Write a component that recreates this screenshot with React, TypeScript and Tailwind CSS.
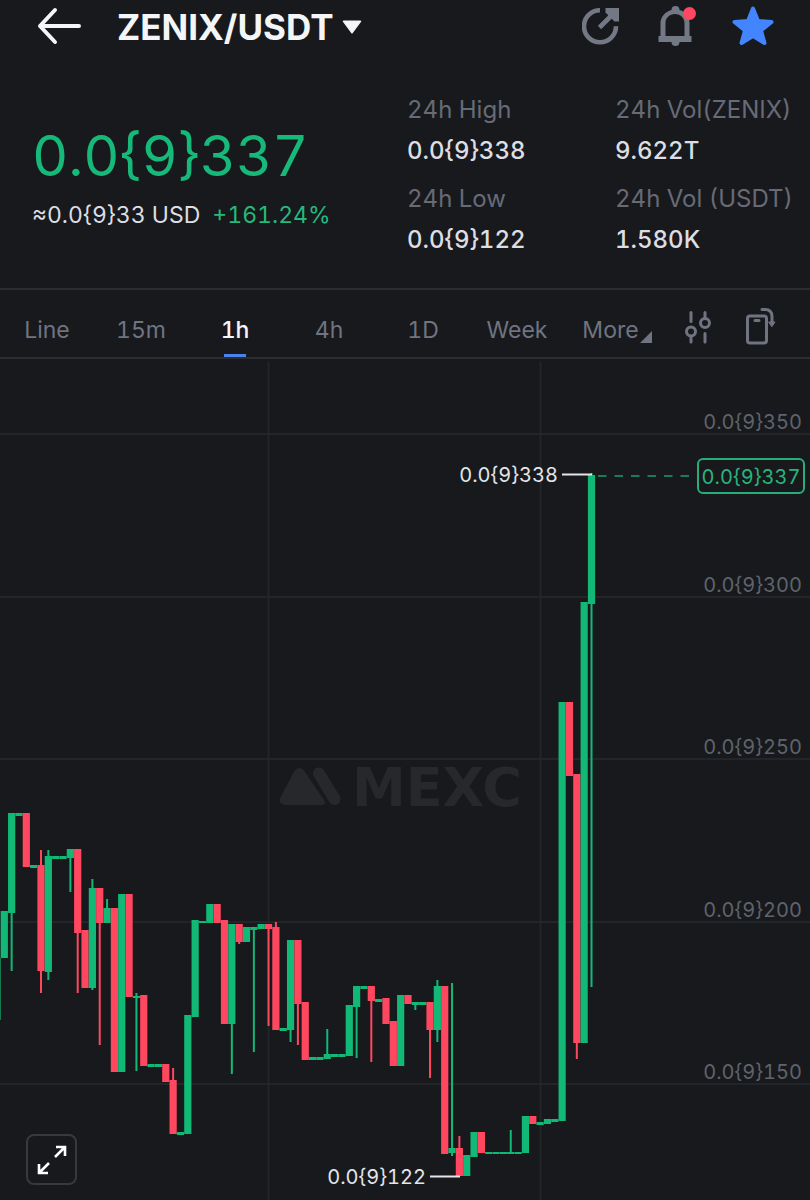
import React from "react";

type Candle = {
  up: boolean;
  high: number;
  top: number;
  bottom: number;
  low: number;
};

const STEP = 7.34;
const FIRST = 4.3;

const g = (top: number, bottom: number, high = top, low = bottom): Candle => ({ up: true, high, top, bottom, low });
const r = (top: number, bottom: number, high = top, low = bottom): Candle => ({ up: false, high, top, bottom, low });

const candles: Candle[] = [
  g(911, 958), g(813, 913, 813, 971), g(813, 816), r(813, 867), g(865, 868),
  r(865, 971, 850, 993), g(856, 972, 850, 980), g(856, 859), g(856, 859), g(849, 858, 849, 892),
  r(849, 933, 849, 993), r(930, 988), g(888, 988, 879, 990), r(888, 923, 888, 1045), g(908, 923, 899, 923),
  r(908, 1072), g(894, 1072), r(894, 997), g(996, 998, 993, 1071), r(995, 1066),
  g(1064, 1067), g(1064, 1067), r(1064, 1082), r(1080, 1134, 1068, 1134), g(1132, 1135),
  g(1015, 1134), g(920, 1017), g(921, 923), g(904, 923), r(904, 923),
  r(920, 1024), g(924, 1024, 924, 1074), r(924, 942, 924, 944), g(927, 942), g(927, 930, 927, 1052),
  g(924, 929), r(924, 929, 924, 1026), r(927, 1030, 922, 1030), g(1028, 1031), g(940, 1030, 940, 1042),
  r(940, 1004, 940, 1045), r(1002, 1060), g(1057, 1060), g(1057, 1060), g(1054, 1059, 1029, 1059),
  g(1054, 1057), g(1054, 1057), g(1005, 1056), g(986, 1007, 986, 1058), g(986, 989),
  r(986, 1001, 986, 1062), g(999, 1002), r(998, 1024), r(1021, 1066), g(995, 1066),
  r(995, 1004), g(1002, 1005, 1002, 1010), g(1002, 1005), r(1002, 1030, 1002, 1078), g(986, 1030, 980, 1042),
  r(986, 1154), g(1148, 1153, 983, 1156), r(1148, 1176, 1136, 1176), g(1155, 1176), g(1132, 1157),
  r(1132, 1153), g(1152, 1154), g(1152, 1154), g(1152, 1154), g(1152, 1154, 1130, 1154),
  g(1152, 1154), g(1116, 1153), r(1116, 1124), g(1122, 1125), g(1119, 1124),
  g(1119, 1122), g(702, 1121), r(702, 776), r(774, 1043, 774, 1059), g(602, 1043),
  g(475, 604, 473, 987),
];

const levels = [
  { y: 434, label: "0.0{9}350" },
  { y: 597, label: "0.0{9}300" },
  { y: 759, label: "0.0{9}250" },
  { y: 922, label: "0.0{9}200" },
  { y: 1084, label: "0.0{9}150" },
];

const stats = [
  { name: "24h High", value: "0.0{9}338" },
  { name: "24h Vol(ZENIX)", value: "9.622T" },
  { name: "24h Low", value: "0.0{9}122" },
  { name: "24h Vol (USDT)", value: "1.580K" },
];

const intervals = ["Line", "15m", "1h", "4h", "1D", "Week"];

function Header() {
  return (
    <header className="flex h-[52px] items-center justify-between pl-[37px] pr-9 text-[#f4f5f7]">
      <div className="flex items-center">
        <button type="button" aria-label="Back" className="mr-9">
          <svg width="44" height="38" viewBox="0 0 44 38" fill="none" stroke="currentColor" strokeWidth="4" strokeLinecap="round" strokeLinejoin="round">
            <path d="M42 19H3M18 3L3 19l15 16" />
          </svg>
        </button>
        <button type="button" className="flex items-center gap-2 pt-0.5">
          <h1 className="text-[35px] leading-10 font-bold">ZENIX/USDT</h1>
          <svg width="20" height="14" viewBox="0 0 20 14" fill="currentColor">
            <path d="M1.500 .5h17a.8.8 0 0 1 .6 1.300L10.800 13a1 1 0 0 1-1.600 0L.9 1.800A.8.8 0 0 1 1.500.5z" />
          </svg>
        </button>
      </div>
      <div className="flex items-center gap-9 text-[#737885]">
        <button type="button" aria-label="Share">
          <svg width="38" height="38" viewBox="0 0 38 38" fill="none" stroke="currentColor" strokeWidth="4.600">
            <path d="M18 3.300A16 16 0 1 0 34 19.300" />
            <path d="M17.500 20.500L31 7" />
            <path d="M23.500 1H37v13.500h-4.500L23.500 5.500z" fill="currentColor" stroke="none" />
          </svg>
        </button>
        <button type="button" aria-label="Price alerts">
          <svg width="40" height="42" viewBox="-1 0 40 42">
            <path d="M14.500 5a4 4 0 0 1 8 0c6.500 1.700 10 7 10 13v13h2v6h-12a4 4 0 0 1-8 0h-13v-6h2V18c0-6 4.500-11.300 11-13zM8.500 31h19V18c0-5-4-9-9.500-9s-9.500 4-9.500 9z" fill="currentColor" fillRule="evenodd" />
            <circle cx="32.500" cy="8.500" r="6.500" fill="#ff4760" />
          </svg>
        </button>
        <button type="button" aria-label="Favorite" className="text-[#4285ff]">
          <svg width="42" height="42" viewBox="0 0 42 42" fill="currentColor" stroke="currentColor" strokeWidth="4" strokeLinejoin="round">
            <path d="M21 3.500l5 12.500 13.500 1-10.500 8.500L32.500 38 21 31 9.500 38l3.500-12.500L2.500 17l13.500-1z" />
          </svg>
        </button>
      </div>
    </header>
  );
}

function Summary() {
  return (
    <section className="grid grid-cols-[375fr_403fr] pt-10 pb-[29px] pl-8 text-[#dcdee3]">
      <div className="pt-[29px]">
        <div className="text-[56px] leading-[70px] text-[#16b979]">0.0{"{9}"}337</div>
        <div className="flex gap-3 pt-2 text-[23px] leading-8 whitespace-nowrap">
          <span>≈0.0{"{9}"}33 USD</span>
          <span className="text-[#25b87c]">+161.24%</span>
        </div>
      </div>
      <dl className="grid grid-cols-[208fr_195fr] gap-y-[11px] whitespace-nowrap">
        {stats.map((s) => (
          <div key={s.name}>
            <dt className="text-2xl leading-9 text-[#676b76]">{s.name}</dt>
            <dd className="pt-1 text-2xl leading-[38px] font-medium">{s.value}</dd>
          </div>
        ))}
      </dl>
    </section>
  );
}

function Intervals() {
  return (
    <nav className="grid h-[71px] grid-cols-[repeat(7,94fr)_80fr_46fr_26fr] border-y-2 border-[#2b2d31] pt-4 text-[23px] text-[#6f7480]">
      {intervals.map((label) => (
        <button
          key={label}
          type="button"
          className={label === "1h" ? "relative pb-0.5 font-medium text-[#f4f5f7]" : "pb-0.5"}
        >
          {label}
          {label === "1h" && <span className="absolute bottom-0 left-1/2 h-[3px] w-[22px] -translate-x-1/2 bg-[#4a82ee]" />}
        </button>
      ))}
      <button type="button" className="flex items-center justify-center gap-px pb-0.5 pl-3">
        More
        <svg width="12" height="12" viewBox="0 0 12 12" fill="currentColor" className="mt-3">
          <path d="M12 0v12H0z" />
        </svg>
      </button>
      <button type="button" aria-label="Indicators" className="flex justify-center pt-1">
        <svg width="28" height="34" viewBox="0 0 28 34" fill="none" stroke="currentColor" strokeWidth="3" strokeLinecap="round">
          <path d="M7 2.500v9M7 27v5M21 2.500V7M21 23.500V32" />
          <circle cx="7" cy="21.500" r="4.500" />
          <circle cx="21" cy="13" r="4.500" />
        </svg>
      </button>
      <button type="button" aria-label="Rotate screen" className="flex justify-center">
        <svg width="32" height="40" viewBox="0 0 32 40" fill="none" stroke="currentColor" strokeWidth="3" strokeLinecap="round" strokeLinejoin="round">
          <rect x="2.500" y="10" width="19" height="27" rx="2.500" />
          <path d="M10 14.500h4M17 3.500h3c5 0 7 3 7 7v7" />
          <path d="M24 16h6l-3 4.500z" fill="currentColor" strokeWidth="1" />
        </svg>
      </button>
    </nav>
  );
}

function Chart() {
  return (
    <div className="relative">
      <svg viewBox="0 359 810 841" className="block w-full" role="img" aria-label="ZENIX/USDT hourly candles">
        <g stroke="#232529" strokeWidth="2">
          {levels.map((l) => (
            <line key={l.y} x1="0" x2="810" y1={l.y} y2={l.y} />
          ))}
          <line x1="268.500" x2="268.500" y1="362" y2="1200" />
          <line x1="540.500" x2="540.500" y1="362" y2="1200" />
        </g>

        {/* watermark */}
        <g fill="#26282c">
          <path d="M294 772q5-8 11 0l19 28q3 5-3 5h-35q-9-1-5-9z" />
          <path d="M319 773.500l15.500 25.500" stroke="#26282c" strokeWidth="12" strokeLinecap="round" />
          <text x="352" y="806" className="font-['DejaVu_Sans'] text-[54px] font-bold">MEXC</text>
        </g>

        <g fill="#5f636b" textAnchor="end" className="text-[20px]">
          {levels.map((l) => (
            <text key={l.y} x="802" y={l.y - 5}>{l.label}</text>
          ))}
        </g>

        {/* part of the candle that is scrolled off to the left */}
        <rect x="0" y="958" width="1" height="62" fill="#14784f" />
        {candles.map((c, i) => {
          const x = FIRST + i * STEP;
          return (
            <g key={i} fill={c.up ? "#12b876" : "#ff4760"}>
              <rect x={x - 1} y={c.high} width="2" height={c.low - c.high} />
              <rect x={x - 3.6} y={c.top} width="7.200" height={c.bottom - c.top} />
            </g>
          );
        })}

        <g fill="#e3e5e9" textAnchor="end" className="text-[20px]">
          <text x="558" y="482">0.0{"{9}"}338</text>
          <text x="426" y="1184">0.0{"{9}"}122</text>
        </g>
        <path d="M562 474.500h30M430 1176.500h30" stroke="#e3e5e9" strokeWidth="2" />

        <path d="M598 476h94" stroke="#1d7a57" strokeWidth="2" strokeDasharray="8.500 8" />
        <rect x="698" y="459" width="106" height="34" rx="5" fill="#18191d" stroke="#27ae78" strokeWidth="2" />
        <text x="751" y="484" textAnchor="middle" fill="#27b57c" className="text-[20px]">0.0{"{9}"}337</text>
      </svg>
      <button
        type="button"
        aria-label="Full screen"
        className="absolute bottom-[15px] left-[26px] flex size-[51px] items-center justify-center rounded-lg border-2 border-[#37393e] bg-[#18191d] text-white"
      >
        <svg width="30" height="30" viewBox="0 0 30 30" fill="none" stroke="currentColor" strokeWidth="2.600">
          <path d="M19 2h9v9M28 2L18 12M2 19v9h9M2 28l10-10" />
        </svg>
      </button>
    </div>
  );
}

export default function App() {
  return (
    <main className="w-full bg-[#18191d] font-[Inter,sans-serif] tabular-nums">
      <Header />
      <Summary />
      <Intervals />
      <Chart />
    </main>
  );
}
